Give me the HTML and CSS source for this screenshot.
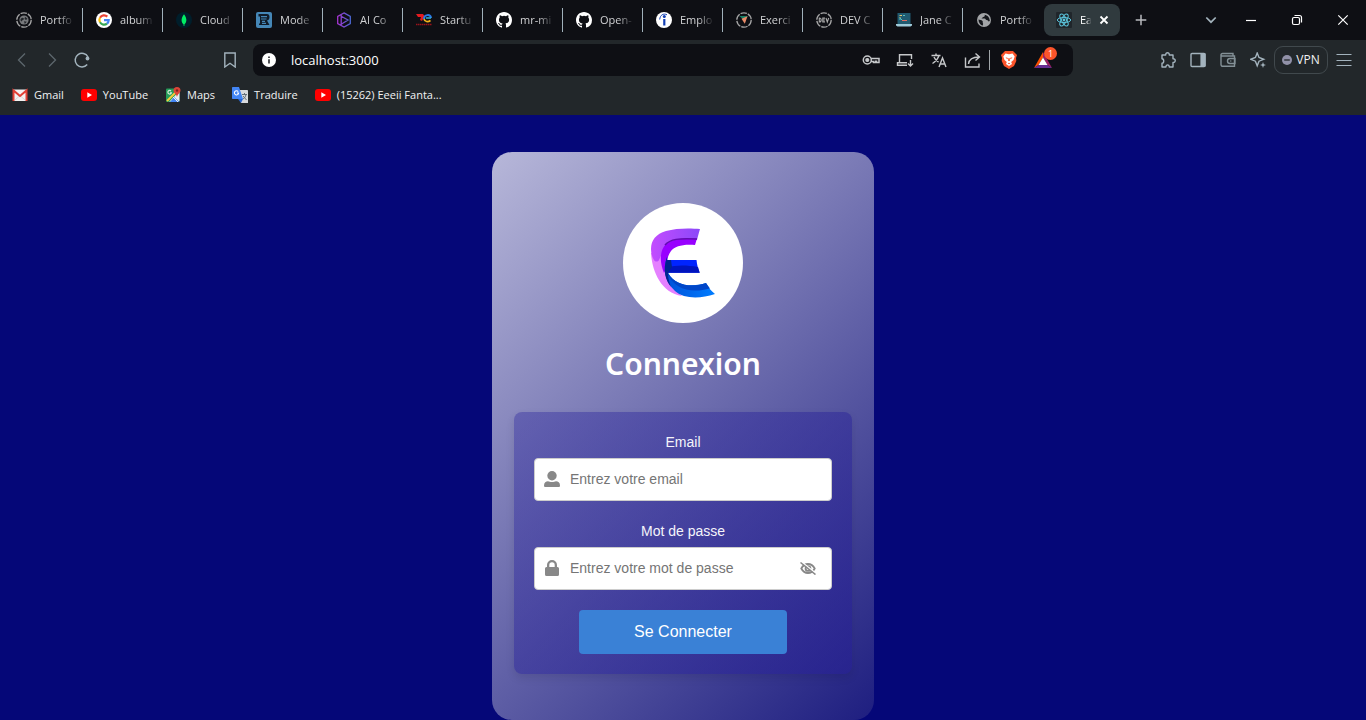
FILE: index.html
```html
<!DOCTYPE html>
<html lang="fr">
<head>
<meta charset="utf-8">
<meta name="viewport" content="width=device-width, initial-scale=1">
<title>Connexion</title>
<link rel="stylesheet" href="styles.css">
</head>
<body>
<svg class="defs" aria-hidden="true">
  <symbol id="github" viewBox="0 0 16 16"><path fill="#fff" d="M8 0C3.58 0 0 3.58 0 8c0 3.54 2.29 6.53 5.47 7.59.4.07.55-.17.55-.38 0-.19-.01-.82-.01-1.49-2.01.37-2.53-.49-2.69-.94-.09-.23-.48-.94-.82-1.13-.28-.15-.68-.52-.01-.53.63-.01 1.08.58 1.23.82.72 1.21 1.87.87 2.33.66.07-.52.28-.87.51-1.07-1.78-.2-3.64-.89-3.64-3.95 0-.87.31-1.59.82-2.15-.08-.2-.36-1.02.08-2.12 0 0 .67-.21 2.2.82a7.6 7.6 0 0 1 4 0c1.53-1.04 2.2-.82 2.2-.82.44 1.1.16 1.92.08 2.12.51.56.82 1.27.82 2.15 0 3.07-1.87 3.75-3.65 3.95.29.25.54.73.54 1.48 0 1.07-.01 1.93-.01 2.2 0 .21.15.46.55.38A8 8 0 0 0 16 8c0-4.42-3.58-8-8-8z"/></symbol>
  <symbol id="youtube" viewBox="0 0 16 16"><rect y="2" width="16" height="12" rx="3" fill="#f00"/><path fill="#fff" d="M6.3 5.3 11 8l-4.700 2.700z"/></symbol>
  <symbol id="ring" viewBox="0 0 16 16"><circle cx="8" cy="8" r="7.200" fill="none" stroke="#a5a5a6" stroke-width="1.300" stroke-dasharray="6.500 1.040"/></symbol>
</svg>

<header class="browser">
  <nav class="tabs" aria-label="Onglets">
    <a class="tab" href="#"><svg class="ico" viewBox="0 0 16 16"><use href="#ring"/><circle cx="8" cy="8" r="4.600" fill="#77797c"/><path fill="#222529" d="M5 6.500c2-2 3 0 3 .6 0 1-2 .7-2.300 2.400C4.500 9 4 7.500 5 6.500zm4-1.800 2.500 2-1.500 1.200-1.500-.9zM8 9.200l2.800.5L8.800 12z"/></svg><span class="title">Portfo</span></a>
    <a class="tab" href="#"><svg class="ico" viewBox="0 0 16 16"><circle cx="8" cy="8" r="8" fill="#fff"/><g fill="none" stroke-width="2.200"><path stroke="#ea4335" d="M4 5.700A4.700 4.700 0 0 1 11.300 4.600"/><path stroke="#fbbc05" d="M4 10.300a4.700 4.700 0 0 1 0-4.600"/><path stroke="#34a853" d="M11 11.600A4.700 4.700 0 0 1 4 10.300"/><path stroke="#4285f4" d="M8 8.200h4.700a4.700 4.700 0 0 1-1.700 3.400"/></g></svg><span class="title">album</span></a>
    <a class="tab" href="#"><svg class="ico" viewBox="0 0 16 16"><circle cx="8" cy="8" r="8" fill="#001e2b"/><path fill="#00ed64" d="M8 2.300c3.200 4 3 8 .4 10.300V14h-.8v-1.400C5 10.300 4.800 6.300 8 2.300z"/></svg><span class="title">Cloud</span></a>
    <a class="tab" href="#"><svg class="ico" viewBox="0 0 16 16"><rect width="16" height="16" rx="2" fill="#4587b7"/><path fill="#101c2a" d="M2.500 2H11q2.500 0 2.500 3T11 8.500l2.500 4.500H3v-1.500h1V4.500H2.500z"/><path stroke="#4587b7" stroke-width="1.100" d="M5 4.600h6M5 7h5.500M6 9.400h3M6 11.400h4"/></svg><span class="title">Mode</span></a>
    <a class="tab" href="#"><svg class="ico" viewBox="0 0 16 16"><defs><linearGradient id="hexfill" x1="0" x2="1"><stop stop-color="#a433cf"/><stop offset="1" stop-color="#4b67d2"/></linearGradient></defs><path fill="none" stroke="url(#hexfill)" stroke-width="1.300" d="m8 .9 6.300 3.500v7.200L8 15.100l-6.300-3.500V4.400zM5.200 3v10M5.200 4.300 12 8l-6.800 4.200"/></svg><span class="title">AI Co</span></a>
    <a class="tab" href="#"><svg class="ico" viewBox="0 0 16 16"><path fill="#e51b20" d="M0 2h7l1.500 2L6 9 4 8l1-3H2z"/><path fill="none" stroke="#2a78e4" stroke-width="2" d="M8 7c0-5 6.500-5 7-1"/><path fill="none" stroke="#35b5d0" stroke-width="1.500" d="M10 6h5"/><path fill="none" stroke="#f3b21b" stroke-width="1.700" d="M8 7c.8 3 4 3.200 6.500 1.500"/><path stroke="#98121b" stroke-width="1.500" stroke-dasharray="1.500 .5" d="M0 12.500h16"/></svg><span class="title">Startu</span></a>
    <a class="tab" href="#"><svg class="ico"><use href="#github"/></svg><span class="title">mr-mi</span></a>
    <a class="tab" href="#"><svg class="ico"><use href="#github"/></svg><span class="title">Open-</span></a>
    <a class="tab" href="#"><svg class="ico" viewBox="0 0 16 16"><circle cx="8" cy="8" r="8" fill="#fff"/><circle cx="8.300" cy="4.500" r="1.500" fill="#123fb5"/><path stroke="#123fb5" stroke-width="2.200" d="M8.300 7v6.500"/><path fill="none" stroke="#123fb5" d="M3.700 7.500C4 3 7.500 1 11 2.800"/></svg><span class="title">Emplo</span></a>
    <a class="tab" href="#"><svg class="ico" viewBox="0 0 16 16"><use href="#ring"/><path fill="#168066" d="M3.300 4h8.500L8 8z"/><path fill="#e78b68" d="m5.500 6.800 6-2.500-2.700 7.500z"/></svg><span class="title">Exerci</span></a>
    <a class="tab" href="#"><svg class="ico" viewBox="0 0 16 16"><use href="#ring"/><path fill="none" stroke="#aaa" stroke-width="1.100" d="M3.300 6v4c2.500 0 2.500-4 0-4zM9 6.100H6.800v3.800H9M6.800 8h2M10 6l1.300 4 1.400-4"/></svg><span class="title">DEV C</span></a>
    <a class="tab" href="#"><svg class="ico" viewBox="0 0 16 16"><path fill="#205a70" d="M1.500 1h13v11h-13z"/><path fill="#9ecad9" d="M0 12h16v1.500l-1.500 1h-13L0 13.500z"/><path fill="none" stroke="#e5c26b" d="M3.500 3.500H6M3.500 5.500h1"/><path fill="none" stroke="#57c2c5" d="M7 3.500h2M4 8V6l2 2"/><path fill="none" stroke="#df6e63" d="M6 8.500h5"/></svg><span class="title">Jane C</span></a>
    <a class="tab" href="#"><svg class="ico" viewBox="0 0 16 16"><circle cx="8" cy="8" r="7" fill="#a2a4a7"/><path fill="#15171c" d="M2.500 7.500C3.500 8 5.500 7.800 6.500 9c.8 1.200-.2 1.500.5 2.500.5.800-.5 1.700-.5 2.200C4 12.700 2.500 10.500 2.500 7.500zM8.500 2.700c1 1.500-.2 2-1.300 2.300C6.500 5.300 6 6 5.500 6.500l3.200.1c1 .1.800 1.400 1.900 1.500 1.300.1 1.600.5 1.800 1.300l1.400-.5c0-2.800-2.200-6-5.300-6.200z"/></svg><span class="title">Portfo</span></a>
    <a class="tab active" href="#" aria-current="page"><svg class="ico" viewBox="0 0 16 16"><rect width="16" height="16" rx="1" fill="#20262b"/><g fill="none" stroke="#5bc4dc"><ellipse cx="8" cy="8" rx="6.700" ry="2.600"/><ellipse cx="8" cy="8" rx="6.700" ry="2.600" transform="rotate(60 8 8)"/><ellipse cx="8" cy="8" rx="6.700" ry="2.600" transform="rotate(120 8 8)"/></g><circle cx="8" cy="8" r="1.400" fill="#5bc4dc"/></svg><span class="title">Ea</span><svg class="close" viewBox="0 0 16 16"><path d="m4.500 4.500 7 7m0-7-7 7"/></svg></a>
    <button class="add" aria-label="Nouvel onglet"><svg class="line" viewBox="0 0 16 16"><path stroke="#b9bbbe" stroke-width="1.500" d="M8 2.700v10.600M2.700 8h10.600"/></svg></button>
    <span class="push"></span>
    <button class="search" aria-label="Rechercher des onglets"><svg class="line" viewBox="0 0 16 16"><path stroke-width="1.700" d="m3.300 5.500 4.700 4.700 4.700-4.700"/></svg></button>
    <button class="win" aria-label="Réduire"><svg class="line white" viewBox="0 0 16 16"><path d="M3 8.500h10"/></svg></button>
    <button class="win" aria-label="Restaurer"><svg class="line white" viewBox="0 0 16 16"><rect x="3.500" y="5.500" width="7" height="7" rx="1.500"/><path d="M5.500 3.500h5a2 2 0 0 1 2 2v5"/></svg></button>
    <button class="win" aria-label="Fermer"><svg class="line white" viewBox="0 0 16 16"><path stroke-width="1.200" d="m3.300 3.300 9.400 9.400m0-9.400-9.400 9.400"/></svg></button>
  </nav>

  <div class="toolbar">
    <button class="tool dim" aria-label="Précédent"><svg class="line" viewBox="0 0 16 16"><path stroke-width="1.300" d="M11 1.500 4.500 8l6.500 6.500"/></svg></button>
    <button class="tool dim" aria-label="Suivant"><svg class="line" viewBox="0 0 16 16"><path stroke-width="1.300" d="M5 1.500 11.500 8 5 14.500"/></svg></button>
    <button class="tool" aria-label="Actualiser"><svg class="line" viewBox="0 0 16 16"><path stroke-width="1.500" d="M13.200 12.500A6.800 6.800 0 1 1 14 5"/><circle cx="13.500" cy="6.500" r="1.900" fill="#a3b3bd" stroke="none"/></svg></button>
    <span class="gap-left"></span>
    <button class="tool mark" aria-label="Ajouter aux favoris"><svg class="line" viewBox="0 0 16 16"><path stroke-width="1.400" d="M2.800 1h10.400v14L8 11.300 2.800 15z"/></svg></button>
    <div class="address">
      <svg class="info" viewBox="0 0 16 16"><circle cx="8" cy="8" r="7" fill="#fff"/><path stroke="#15171c" stroke-width="1.500" d="M8 7.200v4.300M8 4.500V6"/></svg>
      <input class="url" type="text" value="localhost:3000" aria-label="Adresse">
      <button class="site" aria-label="Mots de passe"><svg class="line light" viewBox="0 0 18 16"><g stroke-width="1.500"><circle cx="5.300" cy="8" r="4"/><path d="M9 6.500h8v4h-2.500v-1.200h-1v1.200h-2V9.500H9"/></g><circle cx="5.300" cy="8" r="1.500" fill="#c6c8ca"/></svg></button>
      <button class="site" aria-label="Installer"><svg class="line light" viewBox="0 0 18 16"><path stroke-width="1.400" d="M15.500 7V2.700h-12v8M11 10.700H1.500v2.600H11M14.500 8v5.500m-2.500-2 2.500 2.500 2.500-2.500"/></svg></button>
      <button class="site" aria-label="Traduire la page"><svg class="line light" viewBox="0 0 18 16"><path stroke-width="1.400" d="M1.500 3.500h9M6 1.500v2M9 3.500c-1 3-3.500 6-6.500 8M4 5c1 2.500 2.500 4 4.500 5M9 15l3.500-9L16 15m-6-3h5"/></svg></button>
      <button class="site share" aria-label="Partager"><svg class="line light" viewBox="0 0 18 16"><path stroke-width="1.400" d="M1.500 5.500V15H15v-3.500M4.500 12c.5-4.500 3-7 10.500-7M11.500 1.500 15.500 5l-4 3.500"/></svg></button>
      <button class="site brave" aria-label="Brave Shields"><svg viewBox="0 0 16 18"><path fill="#fb542b" d="M4 0h8l2 2 2 2-1 3 .3 3-2.300 5L8 18l-5-3L.7 10 1 7 0 4l2-2z"/><path fill="#fff" d="m4.500 2.500 3.500.7 3.500-.7 2.200 3L12.500 9l-2.300 2 .8 2L8 15l-3-2 .8-2-2.300-2-1.200-3.500z"/><path fill="#fb542b" d="m4.500 6.300 2.500.6-.8 1.300zm7 0-2.500.6.8 1.300zM7.500 7h1l.5 2.500-1 .8-1-.8zM6.700 12.300 8 11.800l1.300.5-1.300.9z"/></svg></button>
      <button class="site" aria-label="Brave Rewards, 1 notification"><svg class="bat" viewBox="0 0 18 16"><path fill="#ff5000" d="M9 0v5.500L4.500 13 0 16z"/><path fill="#9e1f63" d="m9 0 9 16-4.500-3L9 5.500z"/><path fill="#662d91" d="M0 16h18l-4.500-3h-9z"/><path fill="#fff" d="m9 5.500 4.500 7.500h-9z"/></svg><span class="badge">1</span></button>
    </div>
    <span class="gap-right"></span>
    <button class="tool" aria-label="Extensions"><svg class="line" viewBox="0 0 16 16"><path stroke-width="1.400" stroke-linejoin="round" d="M2 3h3.700c-.2-3 3.800-3 3.600 0H13v3.700c3-.2 3 4 0 3.800V15H9.300c.1-2.800-3.500-2.800-3.400 0H2v-3.700c2.300-.2 2.300-4.400 0-4.600z"/></svg></button>
    <button class="tool" aria-label="Panneau latéral"><svg class="line" viewBox="0 0 16 16"><rect x="1" y="1.500" width="14" height="13" rx="1" stroke-width="1.400"/><path fill="#a3b3bd" d="M11 2h4v12h-4z"/></svg></button>
    <button class="tool" aria-label="Portefeuille"><svg class="line" viewBox="0 0 16 16"><path stroke="#839096" stroke-width="1.400" d="M13 4V1.500H2.500C.5 1.500.5 4 2.500 4h12v10.300H3c-1.300 0-2-.5-2-1.800V3M15 6.500h-5a2.500 2.500 0 0 0 0 5h5zM10.300 9h1"/></svg></button>
    <button class="tool" aria-label="Leo AI"><svg class="line" viewBox="0 0 16 16"><path stroke-width="1.400" d="M7.200 1 9 5.500 13.700 7.300 9 9.200 7.200 13.800 5.400 9.200.7 7.300l4.700-1.800z"/><path fill="#a3b3bd" stroke="none" d="m13 10 .8 2.200 2.200.8-2.200.8L13 16l-.8-2.200L10 13l2.200-.8z"/></svg></button>
    <button class="vpn"><svg viewBox="0 0 10 10"><circle cx="5" cy="5" r="5" fill="#9191a8"/><path stroke="#22272b" stroke-width="1.300" d="M2.200 5h5.600"/></svg>VPN</button>
    <button class="tool" aria-label="Menu"><svg class="line" viewBox="0 0 16 16"><path d="M.5 2.500h15M.5 8.500h15M.5 13.500h15"/></svg></button>
  </div>

  <nav class="bookmarks" aria-label="Favoris">
    <a class="bookmark" href="#"><svg class="ico" viewBox="0 0 16 16"><path fill="#f2f2f2" d="M1 2.500h14v11.500H1z"/><path fill="none" stroke="#d8d8d8" d="m3 13 5-4.500 5 4.500"/><path fill="none" stroke="#e04035" stroke-width="2" d="M1.500 14V3.500L8 9l6.500-5.500V14"/></svg>Gmail</a>
    <a class="bookmark" href="#"><svg class="ico"><use href="#youtube"/></svg>YouTube</a>
    <a class="bookmark" href="#"><svg class="ico" viewBox="0 0 16 16"><rect x="1" y="1.500" width="13.500" height="13.500" rx="1" fill="#259d59"/><path fill="#e9edf0" d="M14.500 4 4 15l4-1 5 1 1.500-1z"/><path fill="#4285f4" d="m9 10 5.500 5H5z"/><path stroke="#f7cc3c" stroke-width="2" d="M2 14 13 3"/><path stroke="#f3f3f3" d="m8 10 5 5"/><path fill="none" stroke="#d4ecd9" stroke-width="1.200" d="M6 4a1.800 1.800 0 1 0 .4 1.800H5"/><path fill="#db4437" d="M12 0a3.500 3.500 0 0 0-3.500 3.500C8.500 6 11.500 7 12 10c.5-3 3.500-4 3.500-6.500A3.500 3.500 0 0 0 12 0z"/><circle cx="12" cy="3.500" r="1.200" fill="#7b231e"/></svg>Maps</a>
    <a class="bookmark" href="#"><svg class="ico" viewBox="0 0 16 16"><path fill="#d8dadd" d="M7 3h8.300q.7 0 .7.700V16H9z"/><path fill="#4285f4" d="M.7 0H7l4 12H.7Q0 12 0 11.300V.7Q0 0 .7 0z"/><path fill="#2866d2" d="m6 12 3 4 2-4z"/><path fill="none" stroke="#fff" stroke-width="1.100" d="M6.200 4.600A2.100 2.100 0 1 0 6.600 6H5"/><path fill="none" stroke="#66717b" d="M10 7.500h5M12.500 6v1.500m1.500 0c-.5 2.500-1.500 3.500-3 4.500m0-3 3.500 4"/></svg>Traduire</a>
    <a class="bookmark" href="#"><svg class="ico"><use href="#youtube"/></svg>(15262) Eeeii Fanta...</a>
  </nav>
</header>

<main class="page">
  <section class="card">
    <svg class="logo" viewBox="0 0 120 120" role="img" aria-label="Logo E">
      <defs>
        <linearGradient id="violet" x1="0" x2="1"><stop stop-color="#c34cff"/><stop offset="1" stop-color="#8b48f8"/></linearGradient>
        <linearGradient id="blue" x1="0" x2="1"><stop stop-color="#0050d8"/><stop offset="1" stop-color="#007dff"/></linearGradient>
      </defs>
      <circle cx="60" cy="60" r="60" fill="#fff"/>
      <path fill="#e580ff" d="M28 50c1 18 10 40 31 43l-5-5c-9-8-13-22-11-38z"/>
      <path fill="url(#violet)" d="M77 26c-10-1-24-1-34 2-10 3-15 9-15 18 0 4 1 8 3 11 1 2 4 2 5 0 2-5 4-8 8-12l11-7 19-1c1-4 2-8 3-11z"/>
      <path fill="#9800ff" d="m74 35.500-2 6.500c-12-1-20 1-24 6-3 4-4 8-4 16l-3 6c-5-12-4-23 2-29 5-5 15-6 31-5.500z"/>
      <path fill="none" stroke="#620cb0" stroke-width="1.500" d="M74 36c-18-1-27 0-32 6"/>
      <path fill="#0024ff" d="M43 57h30.500c.5 5 1.500 9 3.200 12.700H44z"/>
      <path fill="#0014bd" d="M44 64c10-2 20-2 31 0l1.700 5.700H44z"/>
      <path fill="url(#blue)" d="M44 54c-4 11-3 24 8 34 9 8 25 8 40 3-4-3-7-7-9-11-13 4-30 4-38-10.300z"/>
      <path fill="#0046c8" d="m83 80 4 5.500c-19 5-36 1-43-15.500h1c8 14 25 14 38 10z"/>
      <path fill="#00258f" d="M44 54c-5 14-1 24 4 30-2-5-3-10-3-14l4-6-1-7h-4z"/>
    </svg>
    <h1 class="heading">Connexion</h1>
    <form class="form">
      <label class="label" for="email">Email</label>
      <div class="field">
        <svg class="lead" viewBox="0 0 16 16"><circle cx="8" cy="4.700" r="4.700"/><path d="M0 14.500C0 11.500 2 10.300 4 10.300c2 1 6 1 8 0 2 0 4 1.200 4 4.200 0 1-.5 1.500-1.500 1.500h-13C.5 16 0 15.500 0 14.500z"/></svg>
        <input class="entry" id="email" type="email" placeholder="Entrez votre email">
      </div>
      <label class="label" for="password">Mot de passe</label>
      <div class="field">
        <svg class="lead" viewBox="0 0 16 16"><path d="M3 7V5a5 5 0 0 1 10 0v2h.5q1.500 0 1.500 1.500v6q0 1.500-1.500 1.500h-11Q1 16 1 14.500v-6Q1 7 2.500 7zm2.300 0h5.400V5a2.700 2.700 0 0 0-5.400 0z"/></svg>
        <input class="entry" id="password" type="password" placeholder="Entrez votre mot de passe">
        <button class="eye" type="button" aria-label="Afficher le mot de passe"><svg viewBox="0 0 16 14"><g fill="none" stroke="#888"><path stroke-width="1.800" d="M1.300 7.500C4.500 1.500 11.500 1.500 14.700 7.500 11.500 13.500 4.500 13.500 1.300 7.500z"/><circle cx="8" cy="7.500" r="2.400" stroke-width="1.900"/><path stroke="#fff" stroke-width="1.500" d="M1 .5 16 12.500"/><path stroke-width="1.600" d="m.5 1.500 15 12"/></g></svg></button>
      </div>
      <button class="submit" type="submit">Se Connecter</button>
    </form>
  </section>
</main>
</body>
</html>
```

FILE: styles.css
```css
* { box-sizing: border-box; }

body {
  margin: 0;
  min-height: 100vh;
  display: flex;
  flex-direction: column;
  background: #050778;
  font-family: "Liberation Sans", Arial, sans-serif;
}

button {
  padding: 0;
  border: 0;
  background: none;
  font: inherit;
  color: inherit;
}

a { color: inherit; text-decoration: none; }
svg { display: block; flex: none; }
.defs { position: absolute; width: 0; height: 0; }

/* Browser window */
.browser {
  background: #22272a;
  color: #f1f2f3;
  font: 12px/16px "Open Sans", "Noto Sans", sans-serif;
}

.ico { width: 16px; height: 16px; }
.line { width: 16px; height: 16px; fill: none; stroke: #a3b3bd; stroke-width: 1.2; }
.white { stroke: #fff; }
.light { width: 18px; stroke: #c6c8ca; }

.tabs {
  display: flex;
  align-items: center;
  height: 40px;
  padding-left: 3px;
  background: #0e0f14;
}

.tab {
  display: flex;
  align-items: center;
  gap: 8px;
  flex: 0 1 80px;
  min-width: 0;
  height: 24px;
  padding-left: 13px;
  border-right: 1px solid #a0b1bb;
  color: #d0d1d3;
  font-size: 11px;
}

.tab:nth-child(13) { border-color: transparent; }

.title {
  width: 36px;
  white-space: nowrap;
  mask-image: linear-gradient(90deg, #000 50%, transparent 95%);
}

.active {
  flex-basis: 76px;
  height: 32px;
  margin-left: 1px;
  padding-left: 12px;
  border: 0;
  border-radius: 8px;
  background: #303a3e;
  color: #fff;
}

.active .title { width: 12px; margin-right: -4px; }
.close { width: 16px; height: 16px; stroke: #fff; stroke-width: 1.8; fill: none; }
.add, .search, .win { display: grid; place-items: center; height: 40px; }
.add { width: 30px; margin-left: 6px; }
.push { flex: 1; }
.search { width: 34px; }
.win { width: 46px; }

.toolbar {
  display: flex;
  align-items: center;
  height: 40px;
  padding: 0 7px;
}

.tool { display: grid; place-items: center; width: 30px; height: 32px; }
.dim { opacity: .45; }
.gap-left { flex: 118 1 0; }
.gap-right { flex: 80 1 0; }
.mark { margin-right: 8px; }

.address {
  display: flex;
  align-items: center;
  flex: 799 1 21px;
  min-width: 0;
  height: 32px;
  padding: 0 13px 0 8px;
  border-radius: 8px;
  background: #0e0f14;
}

.info { width: 16px; height: 16px; }

.url {
  flex: 1;
  min-width: 0;
  padding: 0;
  margin-left: 14px;
  border: 0;
  background: none;
  color: #fff;
  font: 13px/20px "Open Sans", "Noto Sans", sans-serif;
}

.site { position: relative; display: grid; place-items: center; width: 34px; height: 20px; }
.share { border-right: 1px solid #a0a5a9; }
.brave { margin-left: 2px; }
.brave svg { width: 16px; height: 18px; }
.bat { width: 18px; height: 16px; }

.badge {
  position: absolute;
  top: -3px;
  right: 3px;
  width: 13px;
  height: 13px;
  border-radius: 50%;
  background: #fb542b;
  color: #fff;
  font-size: 9px;
  line-height: 13px;
}

.vpn {
  display: flex;
  align-items: center;
  justify-content: center;
  gap: 4px;
  width: 54px;
  height: 28px;
  margin: 0 1px;
  border: 1px solid #41494d;
  border-radius: 9px;
}

.vpn svg { width: 10px; height: 10px; }

.bookmarks {
  display: flex;
  gap: 17px;
  height: 35px;
  padding: 7px 12px;
  font-size: 11px;
}

.bookmark { display: flex; align-items: flex-start; gap: 6px; white-space: nowrap; }

/* Login page */
.page {
  display: flex;
  justify-content: center;
  align-items: flex-start;
  flex: 1;
  padding-top: 37px;
}

.card {
  display: flex;
  flex-direction: column;
  align-items: center;
  width: 100%;
  max-width: 382px;
  padding: 51px 22px 46px;
  border-radius: 20px;
  background: linear-gradient(135deg, #b7b7d9, #1e1e80);
}

.logo { width: 120px; height: 120px; }

.heading {
  margin: 20px 0 28px;
  color: #fff;
  font: 600 30px/41px "Noto Sans", "Open Sans", sans-serif;
}

.form {
  display: flex;
  flex-direction: column;
  align-items: center;
  width: 100%;
  padding: 20px;
  border-radius: 8px;
  background: linear-gradient(135deg, rgba(30, 24, 150, .35), rgba(38, 30, 150, .5));
  box-shadow: 0 4px 8px rgba(0, 0, 0, .1);
}

.label {
  margin-bottom: 6px;
  color: #f4f4fa;
  font-size: 14px;
  line-height: 20px;
}

.field {
  display: flex;
  align-items: center;
  width: 100%;
  height: 43px;
  margin-bottom: 20px;
  padding: 0 15px 2px 9px;
  border: 1px solid #ccc;
  border-radius: 4px;
  background: #fff;
}

.lead { width: 16px; height: 16px; fill: #888; }

.entry {
  flex: 1;
  min-width: 0;
  height: 100%;
  padding: 0;
  margin-left: 10px;
  border: 0;
  outline: 0;
  background: none;
  font: 14px "Liberation Sans", Arial, sans-serif;
}

.entry::placeholder { color: #757575; }
.eye svg { width: 16px; height: 14px; }

.submit {
  width: 70%;
  height: 44px;
  border-radius: 4px;
  background: #3a81d6;
  color: #fff;
  font-size: 16px;
}
```
